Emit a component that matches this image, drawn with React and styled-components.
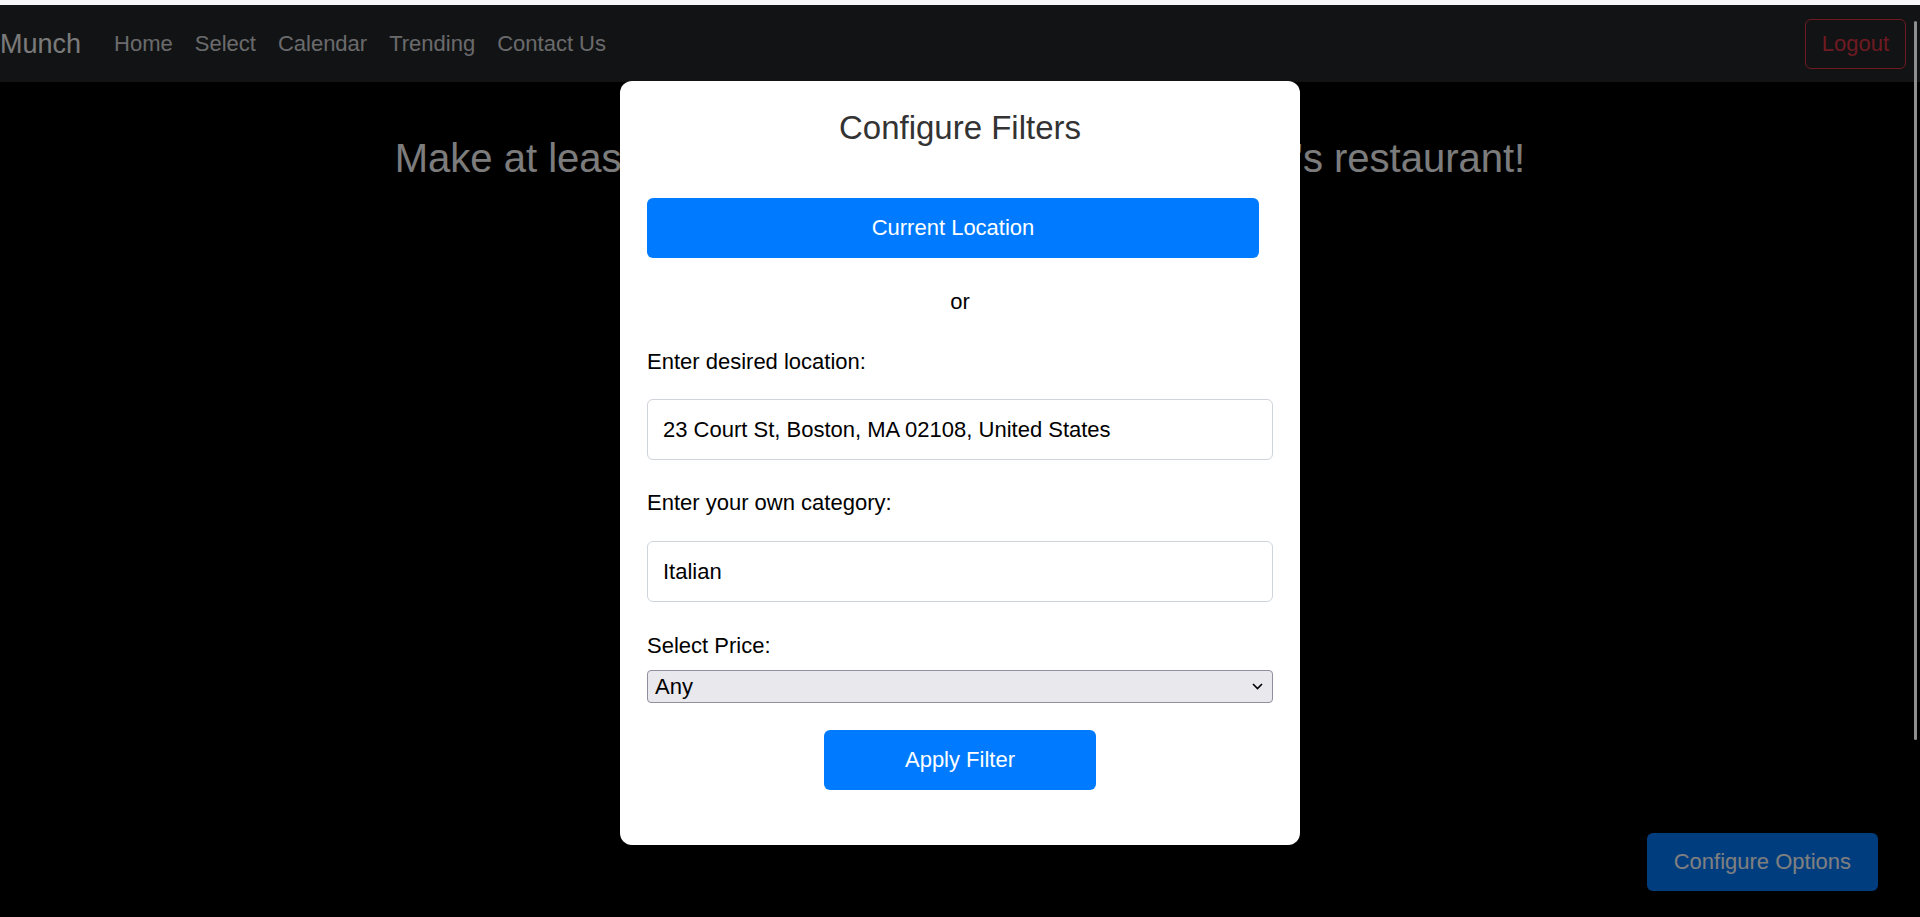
import React from "react";
import styled, { createGlobalStyle } from "styled-components";

const fonte = `"Liberation Sans", Arial, Helvetica, sans-serif`;
const azul = "#007bff";

const GlobalStyle = createGlobalStyle`
  html, body {
    margin: 0;
    padding: 0;
    background: #000;
    font-family: ${fonte};
    overflow: hidden;
  }
  * { box-sizing: border-box; }
`;

const Pagina = styled.div`
  min-height: 100vh;
  background: #000;
`;

const FaixaTopo = styled.div`
  height: 5px;
  background: #f6f6f8;
`;

const BarraNav = styled.nav`
  display: flex;
  align-items: center;
  height: 77px;
  padding: 0 14px 0 0;
  background: #242629;
`;

const Marca = styled.a`
  font-size: 27px;
  line-height: 32px;
  color: #f4f4f4;
  text-decoration: none;
`;

const ListaLinks = styled.div`
  display: flex;
  margin-left: 22px;
`;

const LinkNav = styled.a`
  padding: 0 11px;
  font-size: 22px;
  line-height: 26px;
  color: #d4d5d8;
  text-decoration: none;
`;

const BotaoSair = styled.button`
  margin-left: auto;
  padding: 11px 16px;
  font-family: ${fonte};
  font-size: 22px;
  line-height: 26px;
  color: #dc3545;
  background: transparent;
  border: 1px solid #dc3545;
  border-radius: 6px;
`;

const Conteudo = styled.main`
  text-align: center;
`;

const Chamada = styled.h1`
  margin: 52px 0 0;
  font-size: 40px;
  font-weight: 400;
  line-height: 48px;
  color: #f8f9fa;
`;

const BotaoFlutuante = styled.button`
  position: fixed;
  right: 42px;
  bottom: 26px;
  padding: 16px 27px;
  font-family: ${fonte};
  font-size: 22px;
  line-height: 26px;
  color: #fff;
  background: ${azul};
  border: none;
  border-radius: 6px;
`;

const Fundo = styled.div`
  position: fixed;
  top: 5px;
  left: 0;
  right: 0;
  bottom: 0;
  z-index: 10;
  display: flex;
  justify-content: center;
  align-items: flex-start;
  padding-top: 76px;
  background: rgba(0, 0, 0, 0.5);
`;

const Janela = styled.div`
  width: 680px;
  padding: 27px 27px 55px;
  background: #fff;
  border-radius: 12px;
`;

const TituloJanela = styled.h2`
  margin: 0;
  font-size: 33px;
  font-weight: 400;
  line-height: 40px;
  color: #333;
  text-align: center;
`;

const BotaoAzul = styled.button`
  display: block;
  width: ${({ $largura }) => $largura};
  height: 60px;
  margin: ${({ $margem }) => $margem};
  font-family: ${fonte};
  font-size: 22px;
  line-height: 26px;
  color: #fff;
  background: ${azul};
  border: none;
  border-radius: 6px;
`;

const Ou = styled.p`
  margin: 31px 0 0;
  font-size: 22px;
  line-height: 26px;
  color: #000;
  text-align: center;
`;

const Rotulo = styled.label`
  display: block;
  margin-top: ${({ $topo }) => $topo};
  font-size: 22px;
  line-height: 26px;
  color: #000;
`;

const Campo = styled.input`
  display: block;
  width: 100%;
  height: 61px;
  margin-top: ${({ $topo }) => $topo};
  padding: 0 15px;
  font-family: ${fonte};
  font-size: 22px;
  color: #000;
  background: #fff;
  border: 1px solid #ced4da;
  border-radius: 6px;
  outline: none;
`;

const CaixaSelecao = styled.div`
  position: relative;
  margin-top: 11px;
`;

const Selecao = styled.select`
  display: block;
  width: 100%;
  height: 33px;
  padding: 0 30px 0 7px;
  font-family: ${fonte};
  font-size: 22px;
  color: #000;
  background: #e9e9ed;
  border: 1px solid #8f8f9d;
  border-radius: 4px;
  appearance: none;
  outline: none;
`;

const Seta = styled.svg`
  position: absolute;
  right: 10px;
  top: 13px;
  pointer-events: none;
`;

const BarraRolagem = styled.div`
  position: fixed;
  top: 21px;
  right: 3px;
  width: 3px;
  height: 719px;
  z-index: 20;
  background: #8f8f8f;
  border-radius: 2px;
`;

const links = ["Home", "Select", "Calendar", "Trending", "Contact Us"];

export default function App() {
  return (
    <>
      <GlobalStyle />
      <Pagina>
        <FaixaTopo />
        <BarraNav>
          <Marca>Munch</Marca>
          <ListaLinks>
            {links.map((l) => (
              <LinkNav key={l}>{l}</LinkNav>
            ))}
          </ListaLinks>
          <BotaoSair>Logout</BotaoSair>
        </BarraNav>
        <Conteudo>
          <Chamada>Make at least two selections to generate this group's restaurant!</Chamada>
        </Conteudo>
        <BotaoFlutuante>Configure Options</BotaoFlutuante>
      </Pagina>

      <Fundo>
        <Janela>
          <TituloJanela>Configure Filters</TituloJanela>
          <BotaoAzul $largura="612px" $margem="50px 0 0">
            Current Location
          </BotaoAzul>
          <Ou>or</Ou>
          <Rotulo $topo="34px">Enter desired location:</Rotulo>
          <Campo $topo="24px" defaultValue="23 Court St, Boston, MA 02108, United States" />
          <Rotulo $topo="30px">Enter your own category:</Rotulo>
          <Campo $topo="25px" defaultValue="Italian" />
          <Rotulo $topo="31px">Select Price:</Rotulo>
          <CaixaSelecao>
            <Selecao defaultValue="any">
              <option value="any">Any</option>
              <option value="1">$</option>
              <option value="2">$$</option>
              <option value="3">$$$</option>
              <option value="4">$$$$</option>
            </Selecao>
            <Seta width="11" height="7" viewBox="0 0 11 7">
              <path d="M1 1 L5.5 5.5 L10 1" fill="none" stroke="#000" strokeWidth="1.6" />
            </Seta>
          </CaixaSelecao>
          <BotaoAzul $largura="272px" $margem="27px auto 0">
            Apply Filter
          </BotaoAzul>
        </Janela>
      </Fundo>
      <BarraRolagem />
    </>
  );
}
